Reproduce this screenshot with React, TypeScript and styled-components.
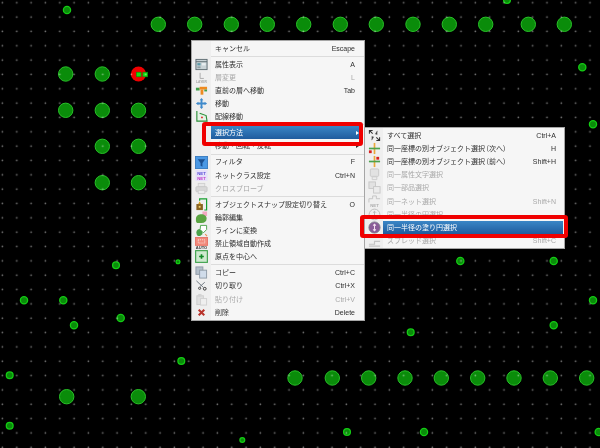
import React from "react";
import styled, { createGlobalStyle } from "styled-components";

const GlobalStyle = createGlobalStyle`
  html, body {
    margin: 0;
    padding: 0;
    background: #000;
  }
`;

const Canvas = styled.div`
  position: relative;
  width: 600px;
  height: 448px;
  overflow: hidden;
  background: #000;
  filter: blur(0.35px);
  font-family: "Noto Sans CJK JP", "Noto Sans", sans-serif;
`;

const Board = styled.svg`
  display: block;
  width: 600px;
  height: 448px;
`;

const Menu = styled.div<{ $left: number; $top: number; $width: number; $gutter: number }>`
  position: absolute;
  left: ${(p) => p.$left}px;
  top: ${(p) => p.$top}px;
  width: ${(p) => p.$width}px;
  box-sizing: border-box;
  padding: 0.8px 0 1px;
  border: 1px solid #a6a6a6;
  background: linear-gradient(
    to right,
    #efefef ${(p) => p.$gutter}px,
    #f6f6f6 ${(p) => p.$gutter}px
  );
`;

const Row = styled.div<{ $disabled?: boolean }>`
  display: flex;
  align-items: stretch;
  height: 13.15px;
  font-size: 7px;
  line-height: 13.15px;
  white-space: nowrap;
  color: ${(p) => (p.$disabled ? "#a9a9a9" : "#2e2e2e")};
`;

const IconCell = styled.div<{ $gutter: number }>`
  flex: 0 0 ${(p) => p.$gutter}px;
  display: flex;
  align-items: center;
  justify-content: center;
`;

const RowBody = styled.div<{ $active?: boolean; $end: number }>`
  flex: 1;
  display: flex;
  align-items: center;
  margin-right: ${(p) => p.$end}px;
  padding-left: 4px;
  ${(p) =>
    p.$active
      ? `
    color: #fff;
    background: linear-gradient(to bottom, #3a86c6, #1f5c9e);
  `
      : ""}
`;

const Label = styled.span`
  flex: 1;
`;

const Shortcut = styled.span`
  font-family: "Liberation Sans", sans-serif;
`;

const ArrowSlot = styled.span<{ $width: number }>`
  flex: 0 0 ${(p) => p.$width}px;
  display: flex;
  align-items: center;
  justify-content: center;
`;

const Arrow = styled.i<{ $active?: boolean }>`
  display: block;
  border-left: 3px solid ${(p) => (p.$active ? "#fff" : "#333")};
  border-top: 2px solid transparent;
  border-bottom: 2px solid transparent;
`;

const Separator = styled.div<{ $gutter: number }>`
  height: 2.85px;
  margin-left: ${(p) => p.$gutter}px;
  display: flex;
  align-items: center;

  &::after {
    content: "";
    flex: 1;
    height: 1px;
    background: #dcdcdc;
  }
`;

const Callout = styled.div<{ $left: number; $top: number; $width: number; $height: number }>`
  position: absolute;
  left: ${(p) => p.$left}px;
  top: ${(p) => p.$top}px;
  width: ${(p) => p.$width}px;
  height: ${(p) => p.$height}px;
  box-sizing: border-box;
  border: 4px solid #f00000;
  border-radius: 3px;
`;

const bigPads: [number, number][] = [
  [65.7, 74], [102.3, 74], [65.7, 110.3], [102.3, 110.3], [138.5, 110.3],
  [102.3, 146.3], [138.5, 146.3], [102.3, 182.7], [138.5, 182.7],
  [158.3, 24.3], [194.7, 24.3], [231.3, 24.3], [267.3, 24.3], [303.7, 24.3],
  [340.3, 24.3], [376.3, 24.3], [413, 24.3], [449.3, 24.3], [485.7, 24.3],
  [528.3, 24.3], [564.3, 24.3],
  [66.7, 396.7], [138.3, 396.7], [295, 378], [332.3, 378], [368.7, 378],
  [405, 378], [441.3, 378], [477.7, 378], [514, 378], [550.3, 378], [586.7, 378],
];

const smallPads: [number, number, number][] = [
  [67, 10, 3.6], [507, 0, 3.4], [582.3, 67.3, 3.6], [593, 124.3, 3.6],
  [116, 265.3, 3.4], [178, 261.7, 1.9], [24, 300.3, 3.6], [63.3, 300.3, 3.6],
  [120.7, 318, 3.6], [74, 325.3, 3.6], [181.3, 361, 3.4], [9.7, 375.3, 3.4],
  [9.7, 425.7, 3.4], [242.3, 440, 2.4], [460.3, 261, 3.6], [553.7, 261, 3.6],
  [593, 300.3, 3.6], [553.7, 325.3, 3.6], [410.7, 332.3, 3.4], [347, 432, 3.4],
  [424, 432, 3.6], [598.7, 432, 3.6],
];

const PcbBoard = () => (
  <Board viewBox="0 0 600 448">
    <defs>
      <pattern
        id="grid"
        width="14.33"
        height="14.34"
        patternUnits="userSpaceOnUse"
        patternTransform="translate(-4.6 -4.3)"
      >
        <path d="M5.7 7h2.6M7 5.7v2.6" stroke="#fff" strokeOpacity="0.2" strokeWidth="0.8" />
        <circle cx="7" cy="7" r="0.5" fill="#fff" fillOpacity="0.45" />
      </pattern>
    </defs>
    {bigPads.map(([x, y]) => (
      <circle key={`${x}-${y}`} cx={x} cy={y} r="7.2" fill="#0a8c0a" stroke="#28c028" strokeWidth="1" />
    ))}
    {smallPads.map(([x, y, r]) => (
      <circle key={`${x}-${y}`} cx={x} cy={y} r={r} fill="#0a8c0a" stroke="#14cc14" strokeWidth="1.3" />
    ))}
    <circle cx="138.5" cy="74" r="7.6" fill="#f00000" />
    <rect x="136.3" y="72.2" width="4.8" height="4.6" fill="#12e012" stroke="#0a8a0a" strokeWidth="0.6" />
    <rect x="142.9" y="72.2" width="4.8" height="4.6" fill="#12e012" stroke="#0a8a0a" strokeWidth="0.6" />
    <rect width="600" height="448" fill="url(#grid)" />
  </Board>
);

const tiny = { fontFamily: "Liberation Sans, sans-serif", fontWeight: 700 };

const icons: Record<string, React.ReactNode> = {
  props: (
    <>
      <rect x="1" y="1.5" width="12" height="11" fill="#c9d3d6" stroke="#5c6a70" />
      <path d="M1 4h12" stroke="#5c6a70" />
      <rect x="2.5" y="5.5" width="3.5" height="2.5" fill="#5f9aa8" />
      <rect x="7.5" y="5.5" width="4" height="2.5" fill="#e8eef0" />
      <rect x="2.5" y="9" width="3.5" height="2" fill="#8fa0a5" />
    </>
  ),
  layer: (
    <>
      <path d="M5.5 2v6h4" fill="none" stroke="#a8a8a8" strokeWidth="1" />
      <text x="7" y="12.5" fontSize="3.6" textAnchor="middle" fill="#a8a8a8" style={tiny}>LAYER</text>
    </>
  ),
  prevLayer: (
    <>
      <rect x="1" y="4" width="4" height="3" fill="#3f9f4a" />
      <rect x="5" y="3" width="8" height="3" fill="#ee8a20" />
      <rect x="6" y="6" width="3" height="5.5" fill="#ee8a20" />
      <rect x="10" y="6" width="3" height="2" fill="#3f9f4a" />
    </>
  ),
  move: (
    <path
      d="M7 1 9 3.6H8V6h2.4V5L13 7l-2.6 2V8H8v2.4h1L7 13l-2-2.6h1V8H3.6v1L1 7l2.6-2v1H6V3.6H5z"
      fill="#3f8acb"
    />
  ),
  route: (
    <>
      <path d="M2 1v11h11l-1-6-7-2.5" fill="#e6f2e6" stroke="#2a8f38" strokeWidth="1.2" />
      <circle cx="7.5" cy="8" r="1" fill="#e02020" />
    </>
  ),
  filter: (
    <>
      <rect x="0.5" y="0.5" width="13" height="13" fill="#4a98e4" stroke="#3a7cc0" />
      <path d="M3 3.5h8L8 7.5V11.5L6 10.5V7.5z" fill="#1c5090" />
    </>
  ),
  netclass: (
    <>
      <rect x="0.5" y="1" width="13" height="12" fill="#e6e0fa" />
      <text x="7" y="6" fontSize="4.6" textAnchor="middle" fill="#5a4ed8" style={tiny}>NET</text>
      <text x="7" y="12" fontSize="4.6" textAnchor="middle" fill="#c03cc8" style={tiny}>NET</text>
    </>
  ),
  printer: (
    <>
      <rect x="3.5" y="1.5" width="7" height="4" fill="#e8e8e8" stroke="#d0d0d0" />
      <rect x="1" y="5" width="12" height="5.5" rx="1" fill="#d8d8d8" stroke="#c8c8c8" />
      <rect x="3.5" y="9" width="7" height="3.5" fill="#ececec" stroke="#d0d0d0" />
    </>
  ),
  snap: (
    <>
      <path d="M5 3V.9h7.5v12H10" fill="none" stroke="#18a030" strokeWidth="1.3" />
      <rect x="1.5" y="6.5" width="7" height="6.5" fill="#8a6420" />
      <path d="M3.5 6.5 5 3.5l1.5 3z" fill="#d8a020" />
      <rect x="4" y="8.5" width="2" height="2" fill="#f2d070" />
    </>
  ),
  outline: (
    <>
      <rect x="8" y="0.5" width="5" height="5" fill="#f2a8c0" />
      <path d="M1 8.5C1 5 4 3.5 7 3.5s5.5 2 5.5 4.5c0 3-2 5-5.5 5H3c-1.2 0-2-1.2-2-2.5z" fill="#5aa442" />
    </>
  ),
  toLine: (
    <>
      <path d="M1.5 9C1.5 7 3 5.5 5 5.5l3 2v3.5L5.5 13h-2c-1 0-2-1.4-2-4z" fill="#4aa24a" />
      <path d="M6 1.5h6.5V6L9 9.5 5.5 6z" fill="#fff" stroke="#4aa24a" />
      <path d="M11 11l2 2" stroke="#e88a50" strokeWidth="1.2" />
    </>
  ),
  keepout: (
    <>
      <rect x="0.5" y="0.5" width="13" height="8.5" fill="#f28a7c" stroke="#e87468" />
      <rect x="3.5" y="3" width="7" height="3.5" fill="none" stroke="#fff" strokeWidth="0.8" strokeDasharray="1 1" />
      <text x="7" y="13.3" fontSize="4.4" textAnchor="middle" fill="#3a3a3a" style={tiny}>AUTO</text>
    </>
  ),
  center: (
    <>
      <rect x="0.7" y="0.7" width="12.6" height="12.6" fill="#cfe9cf" stroke="#3aa048" strokeWidth="1.2" />
      <path d="M7 4.5v5M4.5 7h5" stroke="#138a28" strokeWidth="1.8" />
    </>
  ),
  copy: (
    <>
      <rect x="1" y="1" width="7.5" height="8" fill="#b4bfca" stroke="#8e9aa6" />
      <rect x="5" y="4.5" width="7.5" height="8.5" fill="#d0dcea" stroke="#8e9aa6" />
    </>
  ),
  cut: (
    <>
      <path d="M1.5 2 9 9M10.5 3.5 5.5 8" stroke="#6a747c" strokeWidth="1" />
      <circle cx="10.5" cy="10.5" r="1.5" fill="none" stroke="#303030" strokeWidth="1" />
      <circle cx="5" cy="10" r="1.2" fill="none" stroke="#303030" strokeWidth="0.9" />
    </>
  ),
  paste: (
    <>
      <rect x="2" y="3" width="7" height="9.5" fill="#e0e0e0" stroke="#cccccc" />
      <rect x="3.5" y="1" width="3.5" height="3" fill="#d4d4d4" />
      <rect x="6" y="6" width="6.5" height="7" fill="#efefef" stroke="#d0d0d0" />
    </>
  ),
  remove: (
    <path d="M4 4l6 6M10 4l-6 6" stroke="#b8322a" strokeWidth="2.2" />
  ),
  selectAll: (
    <>
      <path d="M1.5 1.5 5 5M1.5 5V1.5H5" fill="none" stroke="#333" strokeWidth="1.1" />
      <path d="M12.5 12.5 9 9M12.5 9v3.5H9" fill="none" stroke="#333" strokeWidth="1.1" />
      <path d="M10 2 8 5.5 10 6M4 12 6 8.5 4 8" fill="#444" stroke="#444" strokeWidth="0.5" />
    </>
  ),
  samePosNext: (
    <>
      <path d="M7 1v12" stroke="#eaa83a" strokeWidth="1.8" />
      <path d="M1 7h12" stroke="#4ca24c" strokeWidth="1.8" />
      <rect x="1" y="9" width="3" height="3" fill="#d82020" />
    </>
  ),
  samePosPrev: (
    <>
      <path d="M7 1v12" stroke="#eaa83a" strokeWidth="1.8" />
      <path d="M1 7h12" stroke="#4ca24c" strokeWidth="1.8" />
      <rect x="9" y="2" width="3" height="3" fill="#d82020" />
    </>
  ),
  sameAttr: (
    <>
      <rect x="2.5" y="1" width="9" height="8" rx="1" fill="#e2e2e2" stroke="#c8c8c8" />
      <path d="M4.5 9.5h5v3h-5z" fill="#ececec" stroke="#cccccc" />
    </>
  ),
  samePart: (
    <>
      <rect x="1" y="1" width="7" height="7" fill="#e2e2e2" stroke="#c8c8c8" />
      <rect x="6" y="6" width="7" height="7" fill="#ececec" stroke="#c8c8c8" />
    </>
  ),
  sameNet: (
    <>
      <path d="M1 8V4h4V1h4v3h4" fill="none" stroke="#c4c4c4" />
      <text x="7" y="12.8" fontSize="4.6" textAnchor="middle" fill="#aeaeae" style={tiny}>NET</text>
    </>
  ),
  sameCircle: (
    <>
      <circle cx="7" cy="7" r="5.8" fill="#efefef" stroke="#bcbcbc" />
      <path d="M7 3.5v7M5.5 5 7 3.5 8.5 5" fill="none" stroke="#b4b4b4" />
    </>
  ),
  sameFill: (
    <>
      <circle cx="7" cy="7" r="6" fill="#8a5c98" stroke="#7c7c8a" />
      <path d="M7 3.5v7M5.5 5 7 3.5 8.5 5M5.5 9 7 10.5 8.5 9" fill="none" stroke="#f4dff0" strokeWidth="1.1" />
    </>
  ),
  spread: (
    <path d="M1 11h6V8h6M1 13h12" fill="none" stroke="#c4c4c4" strokeWidth="1.2" />
  ),
};

const Icon = ({ name }: { name?: string }) =>
  name ? (
    <svg width="13" height="13" viewBox="0 0 14 14">
      {icons[name]}
    </svg>
  ) : null;

type Item =
  | "sep"
  | {
      label: string;
      keys?: string;
      icon?: string;
      disabled?: boolean;
      active?: boolean;
      arrow?: boolean;
    };

const mainItems: Item[] = [
  { label: "キャンセル", keys: "Escape" },
  "sep",
  { label: "属性表示", keys: "A", icon: "props" },
  { label: "層変更", keys: "L", icon: "layer", disabled: true },
  { label: "直前の層へ移動", keys: "Tab", icon: "prevLayer" },
  { label: "移動", icon: "move" },
  { label: "配線移動", icon: "route" },
  "sep",
  { label: "選択方法", active: true, arrow: true },
  { label: "移動・回転・反転", arrow: true },
  "sep",
  { label: "フィルタ", keys: "F", icon: "filter" },
  { label: "ネットクラス設定", keys: "Ctrl+N", icon: "netclass" },
  { label: "クロスプローブ", icon: "printer", disabled: true },
  "sep",
  { label: "オブジェクトスナップ設定切り替え", keys: "O", icon: "snap" },
  { label: "輪郭編集", icon: "outline" },
  { label: "ラインに変換", icon: "toLine" },
  { label: "禁止領域自動作成", icon: "keepout" },
  { label: "原点を中心へ", icon: "center" },
  "sep",
  { label: "コピー", keys: "Ctrl+C", icon: "copy" },
  { label: "切り取り", keys: "Ctrl+X", icon: "cut" },
  { label: "貼り付け", keys: "Ctrl+V", icon: "paste", disabled: true },
  { label: "削除", keys: "Delete", icon: "remove" },
];

const selectItems: Item[] = [
  { label: "すべて選択", keys: "Ctrl+A", icon: "selectAll" },
  { label: "同一座標の別オブジェクト選択 (次へ)", keys: "H", icon: "samePosNext" },
  { label: "同一座標の別オブジェクト選択 (前へ)", keys: "Shift+H", icon: "samePosPrev" },
  { label: "同一属性文字選択", icon: "sameAttr", disabled: true },
  { label: "同一部品選択", icon: "samePart", disabled: true },
  { label: "同一ネット選択", keys: "Shift+N", icon: "sameNet", disabled: true },
  { label: "同一半径の円選択", icon: "sameCircle", disabled: true },
  { label: "同一半径の塗り円選択", icon: "sameFill", active: true },
  { label: "スプレッド選択", keys: "Shift+C", icon: "spread", disabled: true },
];

const ContextMenu = ({
  items,
  left,
  top,
  width,
  gutter,
  end,
  slot,
}: {
  items: Item[];
  left: number;
  top: number;
  width: number;
  gutter: number;
  end: number;
  slot: number;
}) => (
  <Menu $left={left} $top={top} $width={width} $gutter={gutter}>
    {items.map((item, i) =>
      item === "sep" ? (
        <Separator key={i} $gutter={gutter} />
      ) : (
        <Row key={item.label} $disabled={item.disabled}>
          <IconCell $gutter={gutter}>
            <Icon name={item.icon} />
          </IconCell>
          <RowBody $active={item.active} $end={end}>
            <Label>{item.label}</Label>
            {item.keys && <Shortcut>{item.keys}</Shortcut>}
            <ArrowSlot $width={slot}>
              {item.arrow && <Arrow $active={item.active} />}
            </ArrowSlot>
          </RowBody>
        </Row>
      ),
    )}
  </Menu>
);

const App = () => (
  <Canvas>
    <GlobalStyle />
    <PcbBoard />
    <ContextMenu items={mainItems} left={191} top={40} width={174} gutter={19} end={4} slot={5} />
    <ContextMenu items={selectItems} left={364} top={127} width={201} gutter={18} end={1} slot={7} />
    <Callout $left={201.7} $top={122.3} $width={161} $height={24} />
    <Callout $left={360} $top={215} $width={208.3} $height={23.3} />
  </Canvas>
);

export default App;
